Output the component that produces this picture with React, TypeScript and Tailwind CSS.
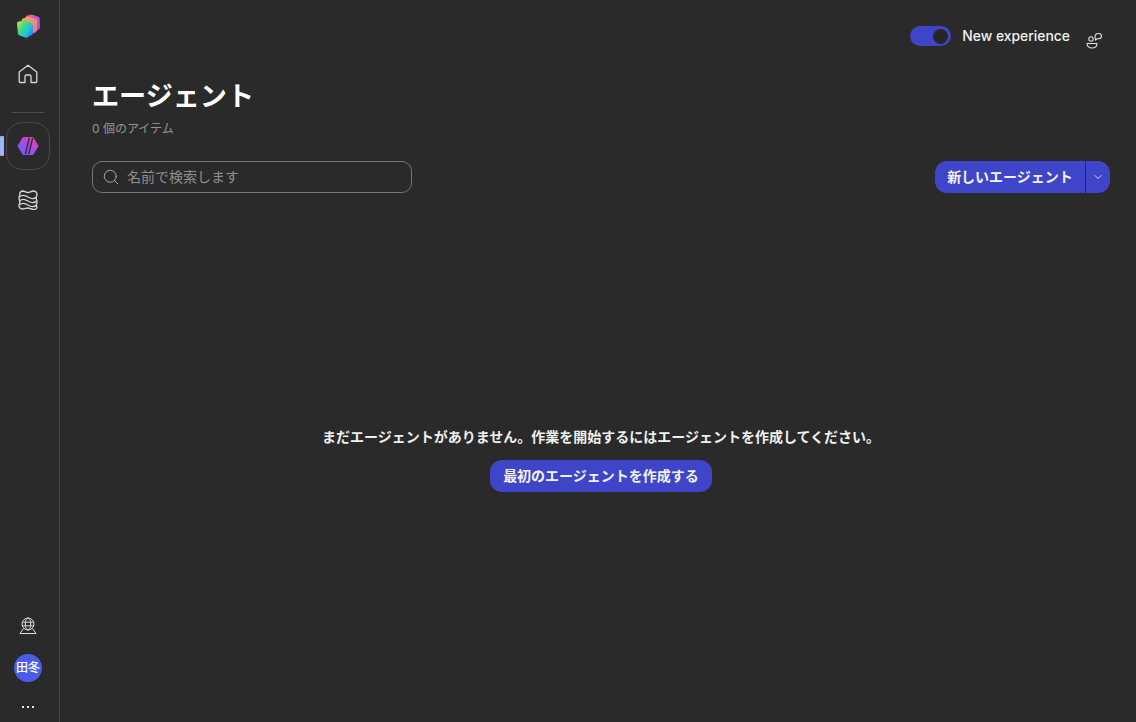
import React from 'react'
import { ChevronDown, Search } from 'lucide-react'

const font = 'font-["Inter","Noto_Sans_CJK_JP",sans-serif]'

const CopilotLogo = () => (
  <svg width="24" height="24" viewBox="0 0 24 24" strokeLinejoin="round">
    <defs>
      <linearGradient id="cube-a" x1="0" y1="0.2" x2="1" y2="0.9">
        <stop offset="0" stopColor="#b4e04e" />
        <stop offset="0.35" stopColor="#3fd88a" />
        <stop offset="0.65" stopColor="#22c6d8" />
        <stop offset="1" stopColor="#2f74f2" />
      </linearGradient>
      <linearGradient id="cube-b" x1="0" y1="0" x2="1" y2="1">
        <stop offset="0" stopColor="#ee5fc8" />
        <stop offset="1" stopColor="#9a4fe0" />
      </linearGradient>
      <linearGradient id="cube-c" x1="0" y1="0" x2="1" y2="1">
        <stop offset="0" stopColor="#f9b04f" />
        <stop offset="1" stopColor="#f3708f" />
      </linearGradient>
    </defs>
    <path d="M10 2.500 15.500 1 23 3.500 23.500 14 18.500 19 14 10Z" fill="url(#cube-b)" stroke="url(#cube-b)" />
    <path d="M6 5.500 12 3 20.500 6 20.500 16 16 20 10 12Z" fill="url(#cube-c)" stroke="url(#cube-c)" />
    <path d="M1.500 8.500 8 6.500 16.500 10 16.500 20 10.500 23.500 2.500 20.500Z" fill="url(#cube-a)" stroke="url(#cube-a)" />
  </svg>
)

const HomeIcon = () => (
  <svg width="20" height="20" viewBox="0 0 20 20" fill="none" stroke="#d6d6d6" strokeWidth="1.3" strokeLinejoin="round">
    <path d="M1.200 8 10 1.200 18.800 8V17.500a1 1 0 0 1-1 1H13V12.500a1.500 1.500 0 0 0-1.500-1.500h-3A1.500 1.500 0 0 0 7 12.500V18.500H2.200a1 1 0 0 1-1-1Z" />
  </svg>
)

const AgentLogo = () => (
  <svg width="22" height="20" viewBox="0 0 22 20">
    <defs>
      <linearGradient id="agent-g" x1="0" y1="1" x2="1" y2="0">
        <stop offset="0" stopColor="#5f60f7" />
        <stop offset="0.5" stopColor="#a64be8" />
        <stop offset="1" stopColor="#f4458f" />
      </linearGradient>
    </defs>
    <path d="M6 1.500h10l5 8.500-5 8.500H6L1 10Z" fill="url(#agent-g)" stroke="url(#agent-g)" strokeLinejoin="round" />
    <path d="M8.300 18 12.300 2M11.700 18 15.700 2" stroke="#2a2a2a" strokeWidth="1.300" fill="none" />
  </svg>
)

const WavesIcon = () => (
  <svg width="20" height="20" viewBox="0 0 20 20" fill="none" stroke="#d8d8d8" strokeWidth="1.300">
    <path d="M4.500 1c2.500 0 3.500 1.500 5.500 1.500S13 1 15.500 1A3.500 3.500 0 0 1 19 4.500c0 1.500-.8 2.200-.8 3.500s.8 2 .8 4-.8 2.200-.8 3.500.8 1 .8 1.500a2.800 2.800 0 0 1-3.500 2.500c-2.500 0-3.500-1.500-5.500-1.500S7 19 4.500 19A3.300 3.300 0 0 1 1 15.500c0-1.300.8-2 .8-3.500S1 10 1 8s.8-2.200.8-3.500A3.300 3.300 0 0 1 4.500 1Z" />
    <path d="M1.500 7c3-3 5.500-2 8.500 0s5.500 3 8.500 0" />
    <path d="M1.500 11c3-3 5.500-2 8.500 0s5.500 3 8.500 0" />
    <path d="M1.500 15c3-3 5.500-2 8.500 0s5.500 3 8.500 0" />
  </svg>
)

const GlobeDeskIcon = () => (
  <svg width="18" height="18" viewBox="0 0 18 18" fill="none" stroke="#dcdcdc" strokeWidth="1">
    <circle cx="9" cy="7" r="6" />
    <ellipse cx="9" cy="7" rx="2.700" ry="6" />
    <path d="M3.300 5.200h11.400M3.300 8.800h11.400M4.500 11.500 1 16.500h16l-3.500-5" />
  </svg>
)

const PeopleIcon = () => (
  <svg width="18" height="18" viewBox="0 0 18 18" fill="none" stroke="#e4e4e4" strokeWidth="1.050">
    <circle cx="6" cy="8" r="2.200" />
    <path d="M2 12.500h10c0 2.800-2.200 4.500-5 4.500S2 15.300 2 12.500Z" />
    <path d="M10 5.500c0-2 1.500-3 3-3h.5c1.800 0 3 1.200 3 2.500s-1.200 2.800-3 2.800H12L10.500 9Z" />
  </svg>
)

const Sidebar = () => (
  <aside className="w-[60px] h-[722px] shrink-0 border-r border-[#484848] flex flex-col items-center pt-[14px] pr-[3px] pb-[10px]">
    <CopilotLogo />
    <div className="mt-[26px] h-[20px]"><HomeIcon /></div>
    <div className="mt-[28px] w-[32px] h-px bg-[#4a4a4a]" />
    <div className="relative mt-[9px] w-[44px] h-[48px] rounded-[16px] border border-[#474747] flex items-center justify-center">
      <div className="absolute left-[-7px] top-[13px] w-[4px] h-[20px] rounded-[1px] bg-[#9fb4f8]" />
      <AgentLogo />
    </div>
    <div className="mt-[20px] h-[20px]"><WavesIcon /></div>
    <div className="mt-auto h-[18px]"><GlobeDeskIcon /></div>
    <div className={`mt-[19px] w-[28px] h-[28px] rounded-full bg-[#4b5ce8] text-white text-[12px] font-medium flex items-center justify-center ${font}`}>田冬</div>
    <div className="mt-[20px] h-[10px] flex items-center gap-[3px]">
      <span className="w-[2px] h-[2px] bg-[#e6e6e6]" />
      <span className="w-[2px] h-[2px] bg-[#e6e6e6]" />
      <span className="w-[2px] h-[2px] bg-[#e6e6e6]" />
    </div>
  </aside>
)

const App: React.FC = () => {
  return (
    <div className={`w-[1136px] h-[722px] overflow-hidden bg-[#2a2a2a] flex ${font}`}>
      <Sidebar />
      <main className="flex-1 pl-[32px] pr-[26px] flex flex-col">
        <div className="h-[78px] pt-[26px] pr-[7px] flex justify-end items-start">
          <div className="w-[41px] h-[20px] rounded-full bg-[#3f45c8] flex items-center justify-end pr-[3px]">
            <div className="w-[15px] h-[15px] rounded-full bg-[#262626]" />
          </div>
          <span className="ml-[11px] h-[20px] leading-[20px] text-[13.9px] font-medium text-[#f0f0f0]">New experience</span>
          <div className="ml-[15px] mt-[5px]"><PeopleIcon /></div>
        </div>
        <h1 className="text-[27.1px] leading-[38px] font-bold text-white">エージェント</h1>
        <p className="mt-[3px] text-[12px] leading-[20px] text-[#959595]">0 個のアイテム</p>
        <div className="mt-[22px] flex justify-between items-center">
          <div className="w-[320px] h-[32px] rounded-[10px] border border-[#757575] flex items-center pl-[9px] gap-[7px]">
            <Search size={18} strokeWidth={1.2} color="#b4b4b4" />
            <span className="pb-[2px] text-[14px] text-[#8f8f8f]">名前で検索します</span>
          </div>
          <div className="h-[32px] flex rounded-[12px] bg-[#3f45c8] text-white">
            <button className="w-[151px] pb-[2px] text-[14px] font-semibold text-[#f2f2f2] border-r border-[#26265e]">新しいエージェント</button>
            <button className="w-[24px] flex items-center justify-center"><ChevronDown size={12} strokeWidth={1.5} /></button>
          </div>
        </div>
        <div className="mt-[234px] flex flex-col items-center">
          <p className="text-[14px] leading-[20px] font-semibold text-[#f0f0f0]">まだエージェントがありません。作業を開始するにはエージェントを作成してください。</p>
          <button className="mt-[13px] pb-[2px] h-[32px] w-[222px] rounded-[12px] bg-[#3f45c8] text-[14px] font-semibold text-[#f2f2f2]">最初のエージェントを作成する</button>
        </div>
      </main>
    </div>
  )
}

export default App
